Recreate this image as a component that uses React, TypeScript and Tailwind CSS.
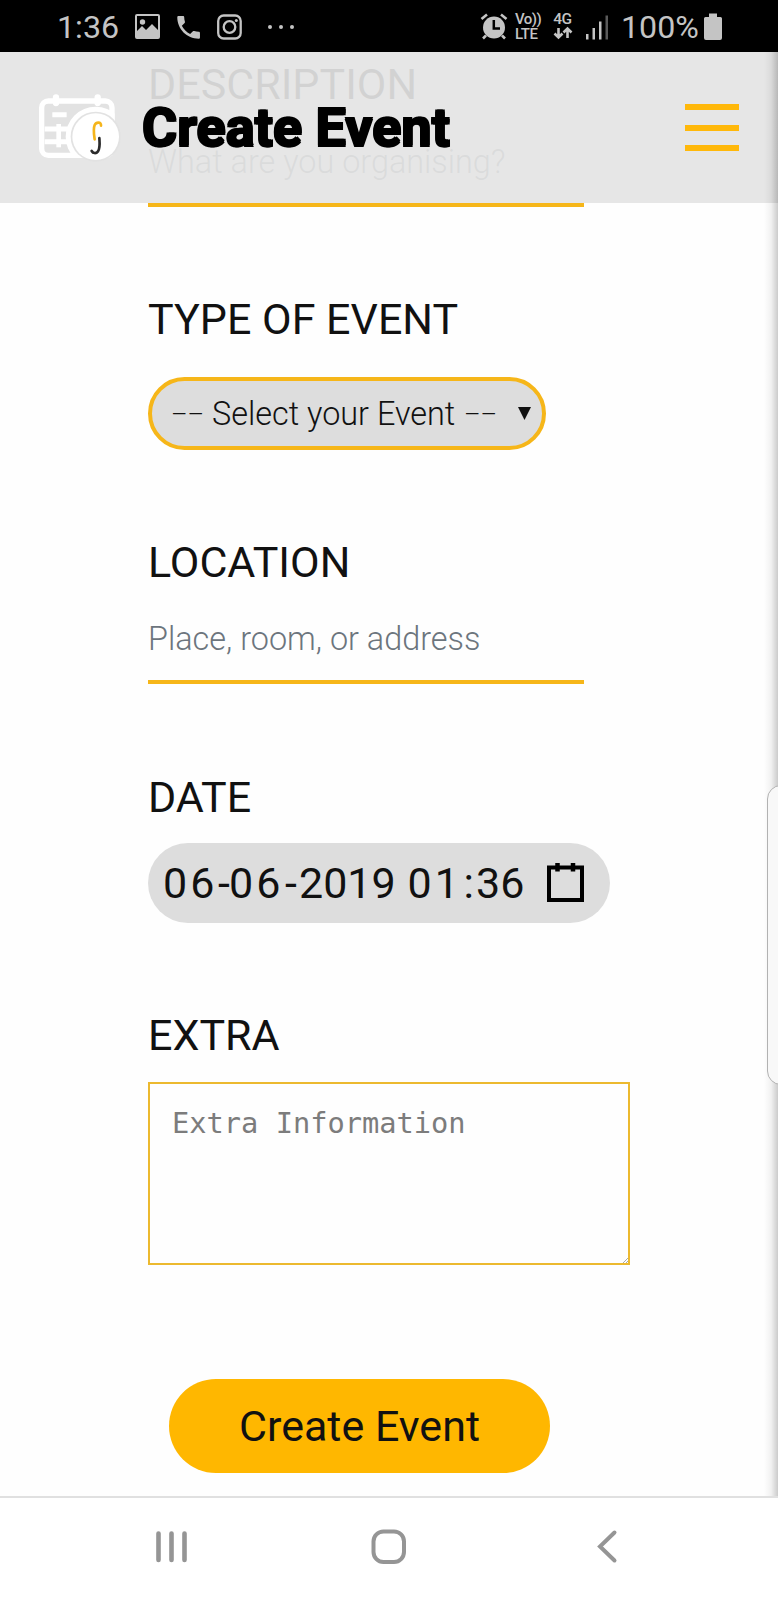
import React from "react";

function StatusBar() {
  return (
    <div className="flex h-[52px] w-full shrink-0 items-center bg-black text-[#c4c4c4]">
      <span className="ml-[57px] w-[78px] text-[32.200px] leading-[54px] pt-[2px] whitespace-nowrap">1:36</span>
      <svg width="162" height="52" viewBox="0 0 162 52" fill="none" className="shrink-0">
        <path fillRule="evenodd" fill="#c4c4c4" d="M2 14h21q2 0 2 2v21q0 2-2 2H2q-2 0-2-2V16q0-2 2-2Zm0 2v15l5-5 4 4 6-6 6 6V16Z" />
        <circle cx="7.500" cy="22" r="2.700" fill="#c4c4c4" />
        <path transform="translate(38.500 12.200) scale(1.260)" fill="#c4c4c4" d="M6.62 10.79c1.44 2.83 3.76 5.14 6.59 6.59l2.200-2.200c.27-.27.67-.36 1.020-.24 1.120.37 2.330.57 3.570.57.55 0 1 .45 1 1V20c0 .55-.45 1-1 1-9.390 0-17-7.610-17-17 0-.55.45-1 1-1h3.500c.55 0 1 .45 1 1 0 1.250.2 2.450.57 3.570.11.35.03.74-.25 1.020l-2.200 2.200z" />
        <rect x="83.200" y="15.500" width="22.500" height="23" rx="5.500" stroke="#c4c4c4" strokeWidth="2.300" />
        <circle cx="94.500" cy="27" r="5.800" stroke="#c4c4c4" strokeWidth="2.300" />
        <circle cx="101.300" cy="20.400" r="1.500" fill="#c4c4c4" />
        <g fill="#c4c4c4"><circle cx="135" cy="27" r="2" /><circle cx="146" cy="27" r="2" /><circle cx="157" cy="27" r="2" /></g>
      </svg>
      <div className="ml-auto mr-[56px] flex h-full items-center">
        <svg width="28" height="52" viewBox="0 0 28 52" fill="none" stroke="#c4c4c4">
          <circle cx="14" cy="27.500" r="11" fill="#c4c4c4" stroke="none" />
          <path d="M1.500 19 7 14.500M26.500 19 21 14.500M6 35.500 3 38.500M22 35.500l3 3" strokeWidth="2.600" />
          <path d="M13.800 20V28.500H20" stroke="#000" strokeWidth="2.500" />
        </svg>
        <div className="ml-[7px] flex w-[30px] flex-col pt-px text-[15px] leading-[14.500px] font-medium tracking-[-0.5px] whitespace-nowrap">
          <span>Vo))</span>
          <span>LTE</span>
        </div>
        <div className="ml-[6px] flex w-[23px] flex-col items-center">
          <span className="text-[15.500px] leading-[14px] font-medium tracking-[-0.4px]">4G</span>
          <svg width="20" height="14" viewBox="0 0 20 14" fill="none" stroke="#c4c4c4" strokeWidth="2.600">
            <path d="M5.500 2v9M1.500 7.500l4 4 4-4M14.500 12V3M10.500 6.500l4-4 4 4" />
          </svg>
        </div>
        <svg width="23" height="52" viewBox="0 0 23 52" className="ml-[12px]">
          <g fill="#c4c4c4"><rect x="0" y="34" width="2.500" height="5.500" /><rect x="6.500" y="28" width="2.500" height="11.500" /><rect x="13" y="21.500" width="2.500" height="18" /></g>
          <rect x="19.500" y="15.500" width="2.500" height="24" fill="#5a5a5a" />
        </svg>
        <span className="ml-[12px] w-[78px] text-[32.200px] leading-[54px] pt-[2px] whitespace-nowrap">100%</span>
        <svg width="18" height="52" viewBox="0 0 18 52" className="ml-[5px]">
          <path fill="#c4c4c4" d="M5 13.500h8V17h3.500q1.500 0 1.500 1.500V38q0 2-2 2H2q-2 0-2-2V18.500Q0 17 1.500 17H5Z" />
        </svg>
      </div>
    </div>
  );
}

function Logo() {
  return (
    <svg width="100" height="90" viewBox="0 0 300 270" fill="none" className="mb-[5px] shrink-0">
      <defs>
        <clipPath id="calendar"><rect x="27" y="56" width="227" height="178" rx="26" /></clipPath>
      </defs>
      <rect x="35" y="63" width="211" height="163" rx="20" fill="#e2e2e2" stroke="#fff" strokeWidth="16" />
      <path d="M78 52v17M203 52v17" stroke="#fff" strokeWidth="19" strokeLinecap="round" />
      <path d="M67 104h43M44 147h80M44 185h80" stroke="#fff" strokeWidth="15" />
      <path d="M86 132v70" stroke="#fff" strokeWidth="14" />
      <circle cx="197" cy="170" r="90" fill="#fff" clipPath="url(#calendar)" />
      <circle cx="197" cy="170" r="75" fill="#e2e2e2" />
      <circle cx="197" cy="170" r="70" fill="#fff" />
      <path d="M213 137c1-12-14-12-19-2-5 12-2 28 0 43" stroke="#f5b51c" strokeWidth="8" strokeLinecap="round" />
      <path d="M208 174c1 14 3 31-4 40-6 8-15 6-19-1" stroke="#2b2b2b" strokeWidth="8" strokeLinecap="round" />
    </svg>
  );
}

function Header() {
  return (
    <header className="absolute inset-x-0 top-[52px] z-10 flex h-[151px] items-center bg-[rgba(228,228,228,0.916)] pr-[39px] pl-[30px]">
      <Logo />
      <h1 className="ml-[12px] text-[54px] leading-[60px] font-bold whitespace-nowrap text-black [text-shadow:1px_1px_0_#000,-1px_-1px_0_#000,1px_-1px_0_#000,-1px_1px_0_#000]">
        Create Event
      </h1>
      <button aria-label="Menu" className="ml-auto flex flex-col gap-[14.500px]">
        <span className="h-[6px] w-[54px] bg-[#ffb80a]" />
        <span className="h-[6px] w-[54px] bg-[#ffb80a]" />
        <span className="h-[6px] w-[54px] bg-[#ffb80a]" />
      </button>
    </header>
  );
}

const label = "block h-[50px] text-[43px] leading-[50px] font-[370] whitespace-nowrap text-[#111]";

function EventForm() {
  return (
    <form className="flex h-[1444px] flex-col items-start overflow-hidden bg-[#fefefe] pl-[148px]">
      <label className={label + " mt-[7px]"}>DESCRIPTION</label>
      <div className="mt-[33px] h-[65px] w-[436px] border-b-4 border-[#f6b619] text-[32.400px] leading-[40px] font-light text-[#6c757d]">
        What are you organising?
      </div>

      <label className={label + " mt-[87px]"}>TYPE OF EVENT</label>
      <div className="mt-[33px] flex h-[73px] w-[398px] items-center rounded-full border-4 border-[#f6b619] bg-[#ddd] pr-[11px] pl-[19px] font-light whitespace-nowrap text-[#111]">
        <span className="w-[41px] text-[25.500px] leading-[40px]">––</span>
        <span className="w-[252px] text-[32.400px] leading-[40px]">Select your Event</span>
        <span className="w-[36px] text-[25.500px] leading-[40px]">––</span>
        <svg width="13" height="13" viewBox="0 0 13 13" className="ml-auto"><path d="M0 0h13L6.500 13Z" fill="#111" /></svg>
      </div>

      <label className={label + " mt-[87px]"}>LOCATION</label>
      <div className="mt-[32px] h-[65px] w-[436px] border-b-4 border-[#f6b619] text-[32.400px] leading-[40px] font-light text-[#6c757d]">
        Place, room, or address
      </div>

      <label className={label + " mt-[88px]"}>DATE</label>
      <div className="mt-[21px] flex h-[80px] w-[462px] items-center rounded-full bg-[#ddd] pr-[26px] pl-[15px] text-[43px] leading-[50px] font-[370] text-[#111]">
        <span className="w-[55px] tracking-[3px]">06</span>
        <span className="w-[11px]">-</span>
        <span className="w-[56px] tracking-[3px]">06</span>
        <span className="w-[14px]">-</span>
        <span className="w-[108.500px]">2019</span>
        <span className="w-[56px] tracking-[3px]">01</span>
        <span className="w-[12.500px]">:</span>
        <span className="w-[50px]">36</span>
        <svg width="37" height="39" viewBox="0 0 37 39" fill="none" stroke="#000" className="mb-[2px] ml-auto">
          <rect x="2" y="4.500" width="33" height="32.500" strokeWidth="4" />
          <path d="M10.500 0v8.500M26 0v8.500" strokeWidth="4.500" />
        </svg>
      </div>

      <label className={label + " mt-[87px]"}>EXTRA</label>
      <div className="relative mt-[22px] h-[183px] w-[482px] border-2 border-[#ecb92f] px-[22px] pt-[21px] font-['DejaVu_Sans_Mono',monospace] text-[28.700px] leading-[36px] text-[#7c7c7c]">
        Extra Information
        <svg width="5" height="5" viewBox="0 0 5 5" className="absolute right-0 bottom-0" stroke="#aaa"><path d="M0 5 5 0M3 5l2-2" /></svg>
      </div>

      <button type="button" className="mt-[114px] ml-[21px] h-[94px] w-[381px] rounded-full bg-[#ffb700] text-[43px] leading-[50px] font-[370] text-[#111]">
        Create Event
      </button>
    </form>
  );
}

function NavBar() {
  return (
    <nav className="flex h-[104px] items-center border-t-2 border-[#e0e0e0] bg-white pb-[4px] pl-[155px]">
      <svg width="33" height="34" viewBox="0 0 33 34" stroke="#959595" strokeWidth="4.600" strokeLinecap="round">
        <path d="M3.500 3.500v26.500M16.500 3.500v26.500M29.500 3.500v26.500" />
      </svg>
      <svg width="36" height="36" viewBox="0 0 36 36" fill="none" className="ml-[183px]">
        <rect x="2.500" y="2.500" width="30.500" height="30.500" rx="10" stroke="#959595" strokeWidth="4" />
      </svg>
      <svg width="22" height="36" viewBox="0 0 22 36" fill="none" className="ml-[190px]">
        <path d="M17.500 3.500 3 17.500 17.500 31.500" stroke="#959595" strokeWidth="4" strokeLinecap="round" />
      </svg>
    </nav>
  );
}

export default function App() {
  return (
    <div className="relative flex h-[1600px] w-[778px] flex-col overflow-hidden bg-white font-[Roboto,sans-serif]">
      <StatusBar />
      <Header />
      <EventForm />
      <NavBar />
      <div className="absolute top-[52px] right-0 z-20 h-[1444px] w-[14px] bg-linear-to-r from-transparent via-black/5 to-black/20" />
      <div className="absolute top-[785px] right-[-20px] z-30 h-[300px] w-[31px] rounded-[14px] border border-[#b2b2b2] bg-[#f8f8f8]" />
    </div>
  );
}
